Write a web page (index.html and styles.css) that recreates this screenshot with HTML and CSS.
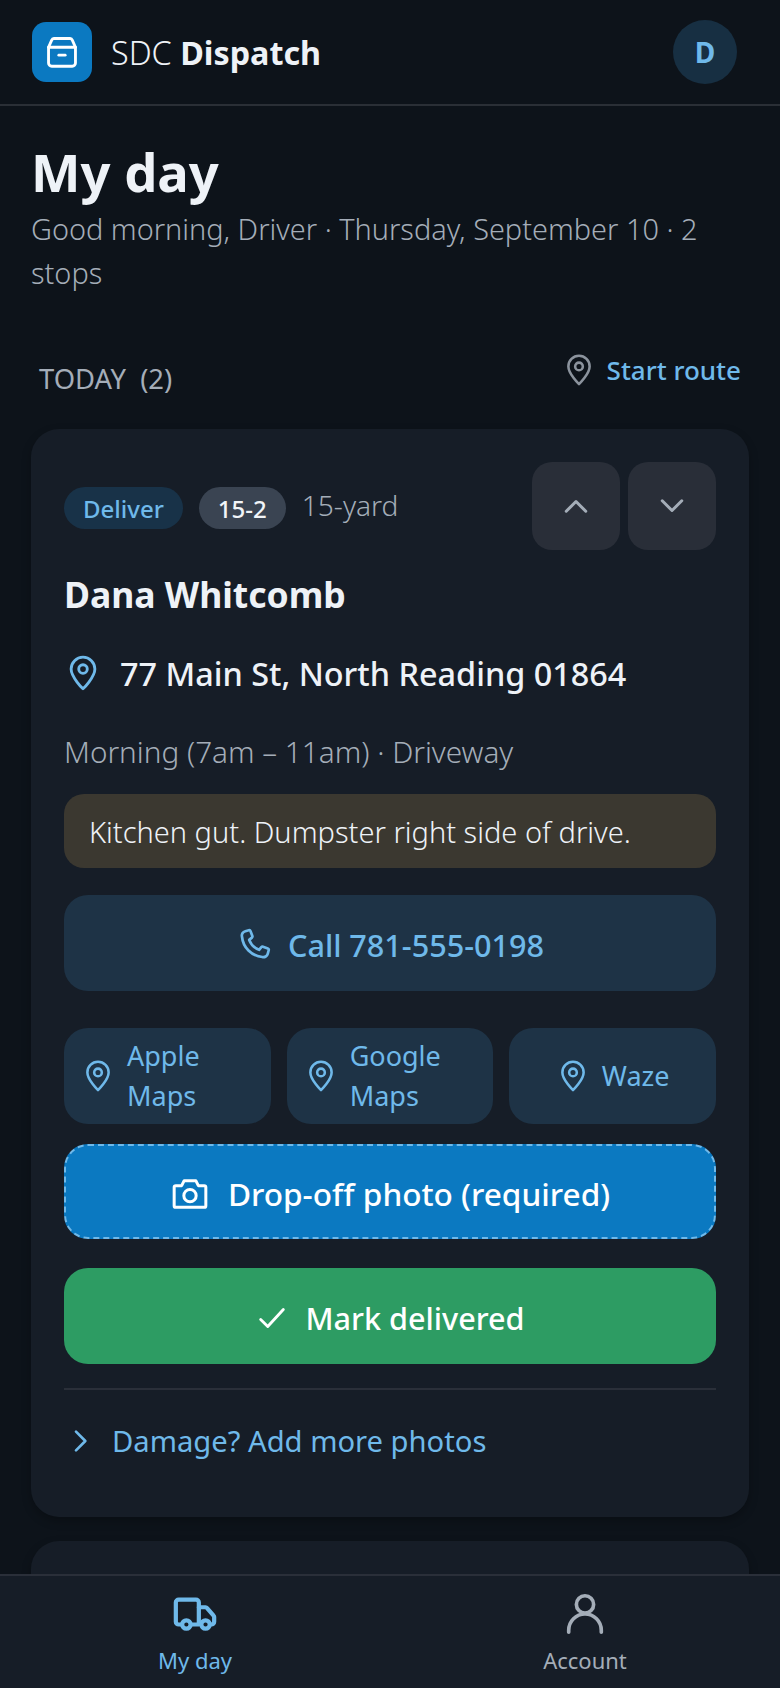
FILE: index.html
```html
<!DOCTYPE html>
<html lang="en">

<head>
  <meta charset="UTF-8">
  <meta name="viewport" content="width=device-width, initial-scale=1.0">
  <title>SDC Dispatch</title>
  <link rel="stylesheet" href="styles.css">
</head>

<body>
  <header class="topbar">
    <div class="brand">
      <span class="logo">
        <svg viewBox="0 0 24 24" width="38" height="38" fill="none" stroke="#fff" stroke-width="1.800" stroke-linecap="round" stroke-linejoin="round">
          <path d="M3.500 9l2-4.500A1.500 1.500 0 0 1 7 3.500h10a1.500 1.500 0 0 1 1.500 1l2 4.500v10a2 2 0 0 1-2 2h-13a2 2 0 0 1-2-2z" />
          <path d="M3.500 9h17" />
          <path d="M10 14h4" />
        </svg>
      </span>
      <span class="brand-name">SDC <b>Dispatch</b></span>
    </div>
    <span class="avatar">D</span>
  </header>

  <main class="content">
    <h1>My day</h1>
    <p class="sub">Good morning, Driver · Thursday, September 10 · 2 stops</p>

    <div class="section-head">
      <span class="section-title">TODAY&nbsp; (2)</span>
      <a class="start-route">
        <svg class="pin pin-grey" viewBox="0 0 24 24"><use href="#pin" /></svg>
        Start route
      </a>
    </div>

    <section class="card">
      <div class="card-top">
        <div class="tags">
          <span class="chip chip-deliver">Deliver</span>
          <span class="chip chip-code">15-2</span>
          <span class="size">15-yard</span>
        </div>
        <div class="order">
          <button class="order-btn">
            <svg viewBox="0 0 24 24" width="36" height="36"><path d="M5.500 15.500l6.500-6.500 6.500 6.500" /></svg>
          </button>
          <button class="order-btn">
            <svg viewBox="0 0 24 24" width="36" height="36"><path d="M5.500 8.500l6.500 6.500 6.500-6.500" /></svg>
          </button>
        </div>
      </div>

      <h2>Dana Whitcomb</h2>
      <div class="address">
        <svg class="pin pin-addr" viewBox="0 0 24 24"><use href="#pin" /></svg>
        77 Main St, North Reading 01864
      </div>
      <p class="window">Morning (7am – 11am) · Driveway</p>
      <div class="note">Kitchen gut. Dumpster right side of drive.</div>

      <a class="btn btn-call">
        <svg viewBox="0 0 24 24" width="36" height="36" fill="none" stroke="currentColor" stroke-width="1.800" stroke-linecap="round" stroke-linejoin="round">
          <path d="M6.200 2.800l2.300-.6a1 1 0 0 1 1.200.6l1.200 3.200a1 1 0 0 1-.3 1.100L8.800 8.600a11.500 11.500 0 0 0 6.600 6.600l1.500-1.800a1 1 0 0 1 1.100-.3l3.200 1.200a1 1 0 0 1 .6 1.200l-.6 2.300A3 3 0 0 1 17.500 20 15 15 0 0 1 4 6.500a3 3 0 0 1 2.200-3.700z" />
        </svg>
        Call 781-555-0198
      </a>

      <div class="maps">
        <a class="map-btn">
          <svg class="pin pin-map" viewBox="0 0 24 24"><use href="#pin" /></svg>
          <span>Apple Maps</span>
        </a>
        <a class="map-btn">
          <svg class="pin pin-map" viewBox="0 0 24 24"><use href="#pin" /></svg>
          <span>Google Maps</span>
        </a>
        <a class="map-btn">
          <svg class="pin pin-map" viewBox="0 0 24 24"><use href="#pin" /></svg>
          <span>Waze</span>
        </a>
      </div>

      <a class="btn btn-photo">
        <svg viewBox="0 0 24 24" width="40" height="40" fill="none" stroke="currentColor" stroke-width="1.800" stroke-linecap="round" stroke-linejoin="round">
          <path d="M3.500 7H7l1.500-3h7L17 7h3.500a1 1 0 0 1 1 1v11a1 1 0 0 1-1 1h-17a1 1 0 0 1-1-1V8a1 1 0 0 1 1-1z" />
          <circle cx="12" cy="13" r="3.700" />
        </svg>
        Drop-off photo (required)
      </a>

      <a class="btn btn-done">
        <svg viewBox="0 0 24 24" width="34" height="34" fill="none" stroke="currentColor" stroke-width="2" stroke-linecap="round" stroke-linejoin="round">
          <path d="M4 13l5 5L20 6" />
        </svg>
        Mark delivered
      </a>

      <a class="damage">
        <svg viewBox="0 0 24 24" width="32" height="32" fill="none" stroke="currentColor" stroke-width="2" stroke-linecap="round" stroke-linejoin="round">
          <path d="M9 5l7 7-7 7" />
        </svg>
        Damage? Add more photos
      </a>
    </section>

    <section class="card card-next"></section>
  </main>

  <nav class="tabbar">
    <a class="tab tab-active">
      <svg viewBox="0 0 24 24" width="46" height="46" fill="none" stroke="currentColor" stroke-width="2.200" stroke-linecap="round" stroke-linejoin="round">
        <path d="M5 18H3.500A1.500 1.500 0 0 1 2 16.500v-10A1.500 1.500 0 0 1 3.500 5h9A1.500 1.500 0 0 1 14 6.500V18H10" />
        <path d="M14 9h3.500a1 1 0 0 1 .8.4l3.400 4a1 1 0 0 1 .3.7v2.400a1.500 1.500 0 0 1-1.500 1.500H20" />
        <circle cx="7.500" cy="18" r="2.200" />
        <circle cx="17.500" cy="18" r="2.200" />
      </svg>
      My day
    </a>
    <a class="tab">
      <svg viewBox="0 0 24 24" width="46" height="46" fill="none" stroke="currentColor" stroke-width="1.900" stroke-linecap="round" stroke-linejoin="round">
        <circle cx="12" cy="7.500" r="4.500" />
        <path d="M3.500 22v-1a8 8 0 0 1 17 0v1" />
      </svg>
      Account
    </a>
  </nav>

  <svg class="defs" width="0" height="0">
    <symbol id="pin" viewBox="0 0 24 24">
      <path d="M12 22s-7.500-7.300-7.500-12.500a7.500 7.500 0 0 1 15 0C19.500 14.700 12 22 12 22z" />
      <circle cx="12" cy="9.500" r="2.700" />
    </symbol>
  </svg>
</body>

</html>
```

FILE: styles.css
```css
* {
  box-sizing: border-box;
}

html,
body {
  height: 100%;
}

body {
  margin: 0;
  display: flex;
  flex-direction: column;
  overflow: hidden;
  background: #0d131a;
  color: #eef2f7;
  font-family: "Noto Sans", "Open Sans", sans-serif;
  font-size: 30px;
}

.defs {
  position: absolute;
}

.topbar {
  flex: none;
  height: 106px;
  padding: 0 43px 0 32px;
  display: flex;
  align-items: center;
  justify-content: space-between;
  border-bottom: 2px solid #2a2f36;
}

.brand {
  display: flex;
  align-items: center;
  gap: 19px;
}

.logo {
  width: 60px;
  height: 60px;
  border-radius: 14px;
  background: #0b79c1;
  display: flex;
  align-items: center;
  justify-content: center;
}

.brand-name {
  font-size: 32.3px;
  font-weight: 300;
}

.brand-name b {
  font-weight: 700;
}

.avatar {
  width: 64px;
  height: 64px;
  border-radius: 50%;
  background: #172f42;
  color: #6fb9ea;
  font-weight: 700;
  font-size: 28px;
  display: flex;
  align-items: center;
  justify-content: center;
}

.content {
  flex: 1;
  min-height: 0;
  overflow: hidden;
  padding: 34px 31px 0;
}

h1 {
  margin: 0;
  font-size: 52.5px;
  line-height: 64px;
  font-weight: 700;
}

.sub {
  margin: 3px 0 0;
  color: #a4adb8;
  font-size: 28.9px;
  font-weight: 300;
  line-height: 44px;
}

.section-head {
  margin-top: 44px;
  height: 90px;
  padding: 0 8px;
  display: flex;
  align-items: flex-start;
  justify-content: space-between;
}

.section-title {
  margin-top: 18px;
  color: #a4adb8;
  font-size: 27.4px;
  line-height: 44px;
}

.start-route {
  display: flex;
  align-items: center;
  gap: 11px;
  height: 44px;
  margin-top: 9px;
  color: #6fb9ea;
  font-size: 26px;
  font-weight: 500;
}

.pin {
  fill: none;
  stroke: currentColor;
  stroke-width: 1.800;
  stroke-linecap: round;
  stroke-linejoin: round;
  flex: none;
}

.pin-grey {
  width: 34px;
  height: 34px;
  color: #8b939d;
}

.pin-addr {
  width: 38px;
  height: 38px;
  color: #6fb9ea;
}

.pin-map {
  width: 34px;
  height: 34px;
}

.card {
  background: #161d27;
  border-radius: 28px;
  padding: 33px;
  height: 1088px;
  box-shadow: 0 4px 10px rgba(0, 0, 0, 0.25);
}

.card-next {
  margin-top: 24px;
  height: 200px;
}

.card-top {
  display: flex;
  align-items: flex-start;
  justify-content: space-between;
}

.tags {
  display: flex;
  align-items: center;
  gap: 16px;
  height: 88px;
  padding-top: 4px;
}

.chip {
  height: 42px;
  padding: 0 19px;
  border-radius: 21px;
  font-size: 24px;
  font-weight: 500;
  display: flex;
  align-items: center;
}

.chip-deliver {
  background: #183248;
  color: #6fb9ea;
}

.chip-code {
  background: #3a4452;
  color: #f2f5f8;
}

.size {
  color: #a4adb8;
  font-size: 28.1px;
  font-weight: 300;
  margin-top: -6px;
}

.order {
  display: flex;
  gap: 8px;
}

.order-btn {
  width: 88px;
  height: 88px;
  border: 0;
  padding: 0;
  border-radius: 20px;
  background: #292e38;
  display: flex;
  align-items: center;
  justify-content: center;
}

.order-btn svg {
  fill: none;
  stroke: #a4adb8;
  stroke-width: 2;
  stroke-linecap: round;
  stroke-linejoin: round;
}

h2 {
  margin: 20px 0 0;
  font-size: 35.5px;
  line-height: 48px;
  font-weight: 700;
}

.address {
  margin-top: 31px;
  display: flex;
  align-items: center;
  gap: 18px;
  font-size: 32.4px;
  line-height: 48px;
  font-weight: 500;
}

.window {
  margin: 31px 0 0;
  color: #a4adb8;
  font-size: 29.7px;
  font-weight: 300;
  line-height: 48px;
}

.note {
  margin-top: 18px;
  height: 74px;
  padding: 0 25px;
  display: flex;
  align-items: center;
  border-radius: 20px;
  background: #3b3830;
  color: #eef2f7;
  font-size: 29px;
  font-weight: 300;
}

.btn {
  height: 96px;
  padding-top: 4px;
  border-radius: 24px;
  display: flex;
  align-items: center;
  justify-content: center;
  gap: 16px;
  font-size: 30.6px;
  font-weight: 500;
}

.btn-call {
  margin-top: 27px;
  background: #1e3346;
  color: #6fb9ea;
}

.maps {
  margin-top: 37px;
  display: grid;
  grid-template-columns: repeat(3, 1fr);
  gap: 16px;
}

.map-btn {
  height: 96px;
  padding: 0 17px;
  border-radius: 24px;
  background: #1e3346;
  color: #6fb9ea;
  font-size: 27px;
  line-height: 40px;
  display: flex;
  align-items: center;
  justify-content: center;
  gap: 12px;
}

.btn-photo {
  margin-top: 20px;
  height: 95px;
  background: #0b79c1;
  border: 2px dashed #6fb9ea;
  color: #fff;
  font-size: 31.6px;
  gap: 18px;
}

.btn-done {
  margin-top: 29px;
  background: #2d9c63;
  color: #fff;
  gap: 16px;
}

.damage {
  margin-top: 24px;
  padding-top: 31px;
  border-top: 2px solid #2a2f39;
  display: flex;
  align-items: center;
  gap: 16px;
  color: #6fb9ea;
  font-size: 29.2px;
  line-height: 40px;
}

.tabbar {
  flex: none;
  height: 114px;
  background: #161d27;
  border-top: 2px solid #2a2f39;
  display: flex;
  position: relative;
}

.tab {
  flex: 1;
  display: flex;
  flex-direction: column;
  align-items: center;
  gap: 9px;
  padding-top: 14px;
  color: #a4adb8;
  font-size: 22px;
  line-height: 30px;
}

.tab-active {
  color: #6fb9ea;
}
```
